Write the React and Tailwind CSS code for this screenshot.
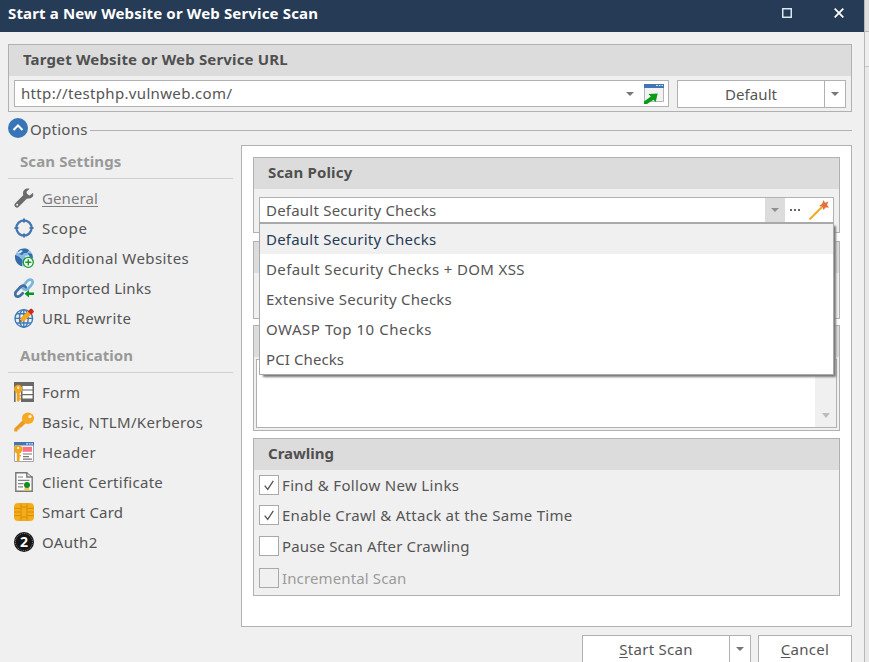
import React from "react";

const line = "border-[#b1b1b1]";

function Caret({ className = "text-[#777]" }) {
  return (
    <svg width="8" height="4" viewBox="0 0 8 4" className={className}>
      <path d="M0 0H8L4 4Z" fill="currentColor" />
    </svg>
  );
}

function GroupHeader({ children, className = "tracking-[0.16px]" }) {
  return (
    <div className={`h-[31px] shrink-0 bg-[#dcdcdc] pl-[14px] text-[15px] leading-[28px] font-bold text-[#505050] ${className}`}>
      {children}
    </div>
  );
}

const icons = {
  wrench: (
    <g>
      <path d="M3 17L12 8" stroke="#6b6b6b" strokeWidth="5" strokeLinecap="round" />
      <path d="M18.9 5L15.6 7.4L12.9 6.4L12.5 3.8L15.6 .7C12.2 -.2 9 1.9 9 5.2C9 9.2 12 11 14.8 10.6C18.2 10.2 20.2 7.8 18.9 5Z" fill="#6b6b6b" />
      <circle cx="3.2" cy="16.8" r="1" fill="#f0f0f0" />
    </g>
  ),
  scope: (
    <g fill="none" stroke="#4375ae">
      <circle cx="10" cy="10" r="7.6" strokeWidth="2.2" />
      <path d="M10 .5V4.5M10 15.5V19.5M.5 10H4.5M15.5 10H19.5" strokeWidth="2" />
    </g>
  ),
  globePlus: (
    <g>
      <circle cx="10" cy="9.5" r="9" fill="#86bce3" />
      <path d="M1 7C3 8 5 8 6 10C8 11 9 12 8 15L8 18.3C3 17 .5 12 1 7ZM4 3C7 0 12 0 15 2L13 5L10 5L8 7L5 6ZM14 5L18 6L19 10L15 9Z" fill="#356aa8" />
      <path d="M3 5L7 2L9 3L6 5.6ZM11 8L15 7L16 10L12 11Z" fill="#d5e9f7" />
      <circle cx="14.3" cy="14.3" r="5" fill="#fff" stroke="#159a2c" strokeWidth="1.3" />
      <path d="M14.3 11.2V17.4M11.2 14.3H17.4" stroke="#159a2c" strokeWidth="1.5" />
    </g>
  ),
  links: (
    <g fill="none" strokeWidth="2.7" strokeLinecap="round">
      <path d="M8 9.5L13.2 3.2C15.2 .8 18.7 1.2 18.7 4.2C18.7 5.8 17.6 6.9 14.2 10.7C12.6 12.2 10.5 12 9.4 10.8" stroke="#79b6dc" />
      <path d="M11.8 9.3C10.3 7.2 8.2 7.2 6.4 9L2.3 13.3C.4 15.5 1 18.7 4 18.7C5.5 18.7 6.7 17.3 8.7 15.3" stroke="#416fa8" />
      <path d="M10.5 15.8L15 12V14.6H20V17H15V19.6Z" fill="#0d921e" />
    </g>
  ),
  rewrite: (
    <g>
      <g fill="none" stroke="#3f79b9" strokeWidth="1.4">
        <circle cx="9.8" cy="10.4" r="8.8" />
        <ellipse cx="9.8" cy="10.4" rx="4.4" ry="8.8" />
        <path d="M9.8 1.6V19.2M1 10.4H18.6M2.5 5.8H17M2.5 15H17" />
      </g>
      <path d="M5.8 13.8L7 9.6L14 3.2L17.3 6.6L10 13.3Z" fill="#f6a81c" />
      <path d="M13.8 3.4L16.2 1.1Q17.2 .2 18 1L19.6 2.7Q20.2 3.7 19.4 4.5L17.1 6.8Z" fill="#d32619" />
      <path d="M5.8 13.8L6.4 11.8L8 13.5Z" fill="#555" />
    </g>
  ),
  form: (
    <g>
      <path d="M0 0H20V20H0Z" fill="#696969" />
      <path d="M8.5 4H18.5V7.4H8.5ZM8.5 8.6H18.5V12H8.5ZM8.5 13.2H18.5V16.6H8.5Z" fill="#fff" />
      <path d="M1.6 10H7V20H1.6Z" fill="#f2efe9" />
      <circle cx="4.2" cy="7" r="4.2" fill="#efa51d" />
      <path d="M2.8 9H5.6V18.5L4.2 20L2.8 18.5ZM5.6 13H7V14.6H5.6ZM5.6 16H7V17.6H5.6Z" fill="#efa51d" />
      <circle cx="4.2" cy="5.7" r="1.2" fill="#fff3d5" />
    </g>
  ),
  key: (
    <g>
      <path d="M9 8L.3 16.6V19.5H3.5V17.5H5.5V15.7L7.2 15.4L12 11Z" fill="#ec9b20" />
      <ellipse cx="14" cy="6.2" rx="6.1" ry="5.7" fill="#f6aa23" />
      <circle cx="16" cy="4.5" r="1.7" fill="#fff0cf" />
    </g>
  ),
  header: (
    <g>
      <path d="M.5 .5H19.5V19.5H.5Z" fill="#fff" stroke="#a4a4ae" />
      <path d="M0 0H20V3.5H0Z" fill="#4175b5" />
      <path d="M12 1.2H14V2.4H12ZM14.8 1.2H16.5V2.4H14.8ZM17.3 1.2H19V2.4H17.3Z" fill="#d6e3f4" />
      <path d="M8.6 4.8H18V9.8H8.6Z" fill="#fa7381" />
      <path d="M9 12H18M9 14.7H15M9 17.2H18" stroke="#77777c" strokeWidth="1.2" />
      <circle cx="4.2" cy="7.2" r="4.2" fill="#efa51d" />
      <path d="M2.8 9H5.6V18.5L4.2 20L2.8 18.5ZM5.6 13H7V14.6H5.6Z" fill="#efa51d" />
      <circle cx="4.2" cy="5.9" r="1.2" fill="#fff3d5" />
    </g>
  ),
  certificate: (
    <g>
      <path d="M1.8 .8H12.8V5H18.2V19.2H1.8Z" fill="#fbfbfb" stroke="#777" strokeWidth="1.4" />
      <path d="M12.8 .8L18.2 5" fill="none" stroke="#777" />
      <path d="M4 5H9M4 8.3H15.5M4 11.6H9.5M4 14.9H9" stroke="#858585" strokeWidth="1.2" />
      <path d="M10.8 15L10 19L12.8 17.8L15.8 19L14.8 15Z" fill="#efc84d" />
      <circle cx="13" cy="13" r="3" fill="#108e21" />
    </g>
  ),
  card: (
    <g>
      <rect x="0" y="1" width="20" height="18" rx="4" fill="#f4ac18" />
      <path d="M0 6.4H7V1.5M20 6.4H13V1.5M0 13.6H7V18.5M20 13.6H13V18.5M0 10H6M20 10H14M7 6.4V13.6M13 6.4V13.6M7 5H13M7 15H13" fill="none" stroke="#d48a10" strokeWidth=".9" />
    </g>
  ),
};

function Icon({ name }) {
  if (name === "oauth") {
    return (
      <span className="flex size-5 shrink-0 items-center justify-center rounded-full bg-[#151515]">
        <span className="flex size-[18px] items-center justify-center rounded-full border border-dotted border-[#888] text-[14px] leading-none font-bold text-white">2</span>
      </span>
    );
  }
  return (
    <svg width="20" height="20" viewBox="0 0 20 20" fill="none" className="shrink-0">
      {icons[name]}
    </svg>
  );
}

function NavItem({ icon, label, spacing = "", selected }) {
  return (
    <li className="flex h-[30px] items-center gap-2 pl-[6px]">
      <Icon name={icon} />
      <span className={`leading-5 whitespace-nowrap ${spacing} ${selected ? "text-[#7d7d7d] underline decoration-1 underline-offset-[2px]" : ""}`}>{label}</span>
    </li>
  );
}

function Check({ checked, disabled, label, spacing, className = "" }) {
  return (
    <div className={`flex h-5 items-center gap-[3px] ${disabled ? "text-[#9b9b9b]" : ""} ${className}`}>
      <span className={`flex size-5 items-center justify-center border border-[#a9a9a9] ${disabled ? "bg-[#f0f0f0]" : "bg-white"}`}>
        {checked && (
          <svg width="10" height="11" viewBox="0 0 10 11" fill="none" stroke="#555" strokeWidth="1.3">
            <path d="M.7 5.6L3.7 9.3L9.3 .8" />
          </svg>
        )}
      </span>
      <span className={`whitespace-nowrap ${spacing}`}>{label}</span>
    </div>
  );
}

const policies = [
  ["Default Security Checks", "tracking-[0.22px]"],
  ["Default Security Checks + DOM XSS", "tracking-[0.36px]"],
  ["Extensive Security Checks", "tracking-[0.23px]"],
  ["OWASP Top 10 Checks", "tracking-[0.53px]"],
  ["PCI Checks", "tracking-[0.1px]"],
];

export default function App() {
  return (
    <div className="flex h-[662px] w-[869px] overflow-hidden bg-[#e8e8e8] font-['Noto_Sans','Open_Sans',sans-serif] text-[15px] leading-5 text-[#555]">
      <div className="flex h-full w-[864px] shrink-0 flex-col bg-[#f0f0f0]">
        <header className="flex h-8 shrink-0 items-start bg-[#263b55] pl-2 text-white">
          <h1 className="pt-[3px] text-[15px] leading-5 font-bold tracking-[0.15px]">Start a New Website or Web Service Scan</h1>
          <div className="mt-2 mr-5 ml-auto flex gap-[42px]">
            <svg width="10" height="10" viewBox="0 0 10 10" fill="none" stroke="#d9e6f2" strokeWidth="1.5">
              <path d="M.75 .75H9.25V9.25H.75Z" />
            </svg>
            <svg width="10" height="10" viewBox="0 0 10 10" fill="none" stroke="#fff" strokeWidth="1.8">
              <path d="M.7 .7L9.3 9.3M9.3 .7L.7 9.3" />
            </svg>
          </div>
        </header>

        <section className={`mt-3 ml-2 h-[68px] w-[844px] shrink-0 border ${line}`}>
          <GroupHeader>Target Website or Web Service URL</GroupHeader>
          <div className="mt-1 flex items-start gap-2 pl-[5px]">
            <div className={`flex h-[27px] w-[655px] items-center border bg-white pr-[4px] pl-[6px] ${line}`}>
              <span className="mr-auto pb-[2px] tracking-[0.34px]">http://testphp.vulnweb.com/</span>
              <Caret />
              <svg width="20" height="20" viewBox="0 0 20 20" className="ml-[10px]">
                <path d="M.5 .5H19.5V17.5H.5Z" fill="#f2f2f2" stroke="#b5b5b5" />
                <path d="M0 0H20V4H0Z" fill="#4375b0" />
                <path d="M12 1.5H14M15 1.5H16.5M17.5 1.5H19" stroke="#d8e7f6" />
                <path d="M4.5 10L13.7 9.5L11.7 18L9.5 15.7L3 20H0V17.5L6.8 12.6Z" fill="#0a9b1b" />
              </svg>
            </div>
            <div className={`flex h-7 w-[169px] border bg-white ${line}`}>
              <span className={`flex flex-1 items-center justify-center border-r tracking-[0.1px] ${line}`}>Default</span>
              <span className="flex w-5 items-center justify-center"><Caret /></span>
            </div>
          </div>
        </section>

        <div className="mt-[6px] ml-2 flex h-5 w-[844px] shrink-0 items-center">
          <svg width="20" height="20" viewBox="0 0 20 20" fill="none">
            <circle cx="10" cy="10" r="10" fill="#3875b7" />
            <path d="M5.5 12L10 7.5L14.5 12" stroke="#fff" strokeWidth="2" />
          </svg>
          <span className="mt-[2px] mr-[2px] ml-[2px] tracking-[0.27px]">Options</span>
          <span className={`mt-[5px] flex-1 border-t ${line}`} />
        </div>

        <div className="mt-[7px] ml-2 flex h-[482px] shrink-0">
          <aside className="w-[225px]">
            <h2 className="h-[34px] border-b border-[#d0d0d0] pt-[6px] pl-3 font-bold tracking-[0.1px] text-[#999]">Scan Settings</h2>
            <ul className="mt-1 h-[150px]">
              <NavItem icon="wrench" label="General" spacing="tracking-[0.1px]" selected />
              <NavItem icon="scope" label="Scope" spacing="tracking-[0.7px]" />
              <NavItem icon="globePlus" label="Additional Websites" spacing="tracking-[0.42px]" />
              <NavItem icon="links" label="Imported Links" spacing="tracking-[0.18px]" />
              <NavItem icon="rewrite" label="URL Rewrite" spacing="tracking-[0.36px]" />
            </ul>
            <h2 className="mt-[6px] h-[34px] border-b border-[#d0d0d0] pt-[6px] pl-3 font-bold text-[#999]">Authentication</h2>
            <ul className="mt-1">
              <NavItem icon="form" label="Form" spacing="tracking-[0.3px]" />
              <NavItem icon="key" label="Basic, NTLM/Kerberos" spacing="tracking-[0.31px]" />
              <NavItem icon="header" label="Header" spacing="tracking-[0.35px]" />
              <NavItem icon="certificate" label="Client Certificate" spacing="tracking-[0.27px]" />
              <NavItem icon="card" label="Smart Card" spacing="tracking-[0.2px]" />
              <NavItem icon="oauth" label="OAuth2" spacing="tracking-[0.35px]" />
            </ul>
          </aside>

          <main className={`ml-2 w-[611px] border bg-white px-[11px] pt-[11px] ${line}`}>
            <section className={`relative h-[76px] border bg-[#f0f0f0] ${line}`}>
              <GroupHeader>Scan Policy</GroupHeader>
              <div className={`mt-2 ml-[5px] flex h-[26px] w-[575px] items-center border bg-white pl-[6px] ${line}`}>
                <span className="mr-auto tracking-[0.22px]">Default Security Checks</span>
                <span className="flex h-6 w-5 items-center justify-center bg-[#dcdcdc]"><Caret className="text-[#909090]" /></span>
                <span className="flex w-5 justify-center gap-[2px]">
                  <i className="size-[2px] bg-[#666]" /><i className="size-[2px] bg-[#666]" /><i className="size-[2px] bg-[#666]" />
                </span>
                <svg width="20" height="20" viewBox="0 0 20 20" className="mr-1 ml-1">
                  <path d="M.5 19.5L13 7" stroke="#f1aa20" strokeWidth="2" />
                  <path d="M14.5 0L16 2.8L19.5 1.5L18 4.8L20 7.5L16.5 7.4L14.5 10L13.2 6.8L10 6L13 4Z" fill="#e6703b" />
                </svg>
              </div>
              <ul className="absolute top-[64px] left-[5px] z-10 h-[153px] w-[575px] border border-t-2 border-[#a9a9a9] bg-white shadow-[3px_3px_2px_-1px_#777]">
                {policies.map(([name, spacing], i) => (
                  <li key={name} className={`h-[30px] pt-[5px] pl-[6px] ${spacing} ${i === 0 ? "bg-[#f0f0f0] text-[#263b55]" : ""}`}>{name}</li>
                ))}
              </ul>
            </section>
            <section className={`mt-2 h-[78px] border bg-[#f0f0f0] ${line}`}><GroupHeader /></section>
            <section className={`mt-[6px] h-[106px] border bg-[#f0f0f0] ${line}`}>
              <GroupHeader />
              <div className={`mt-[2px] ml-[2px] flex h-[69px] w-[581px] justify-end border bg-white ${line}`}>
                <div className="flex w-[21px] items-end justify-center bg-[#f0f0f0] pb-[9px]">
                  <svg width="8" height="5" viewBox="0 0 8 5"><path d="M0 0H8L4 5Z" fill="#bcbcbc" /></svg>
                </div>
              </div>
            </section>
            <section className={`mt-[7px] h-[158px] border bg-[#f0f0f0] ${line}`}>
              <GroupHeader className="tracking-normal">Crawling</GroupHeader>
              <div className="pl-[5px]">
                <Check checked label="Find & Follow New Links" spacing="tracking-[0.34px]" className="mt-[5px]" />
                <Check checked label="Enable Crawl & Attack at the Same Time" spacing="tracking-[0.27px]" className="mt-[10px]" />
                <Check label="Pause Scan After Crawling" spacing="tracking-[0.15px]" className="mt-[11px]" />
                <Check disabled label="Incremental Scan" spacing="tracking-[0.13px]" className="mt-3" />
              </div>
            </section>
          </main>
        </div>

        <footer className="mt-2 flex h-[27px] shrink-0 justify-end gap-[7px] pr-3">
          <div className={`flex w-[169px] border border-b-0 bg-white ${line}`}>
            <span className={`flex-1 border-r pt-[3px] text-center tracking-[0.28px] ${line}`}><u className="underline-offset-2">S</u>tart Scan</span>
            <span className="flex w-5 items-center justify-center"><Caret /></span>
          </div>
          <div className={`w-[94px] border border-b-0 bg-white pt-[3px] text-center tracking-[0.3px] ${line}`}><u className="underline-offset-2">C</u>ancel</div>
        </footer>
      </div>
      <div className="flex-1 border-l border-[#b8b8b8]">
        <div className="h-8 border-b border-[#b5b5b5] bg-[#dedede]" />
        <div className="h-[35px] border-b border-[#c5c5c5] bg-[#eee]" />
      </div>
    </div>
  );
}
